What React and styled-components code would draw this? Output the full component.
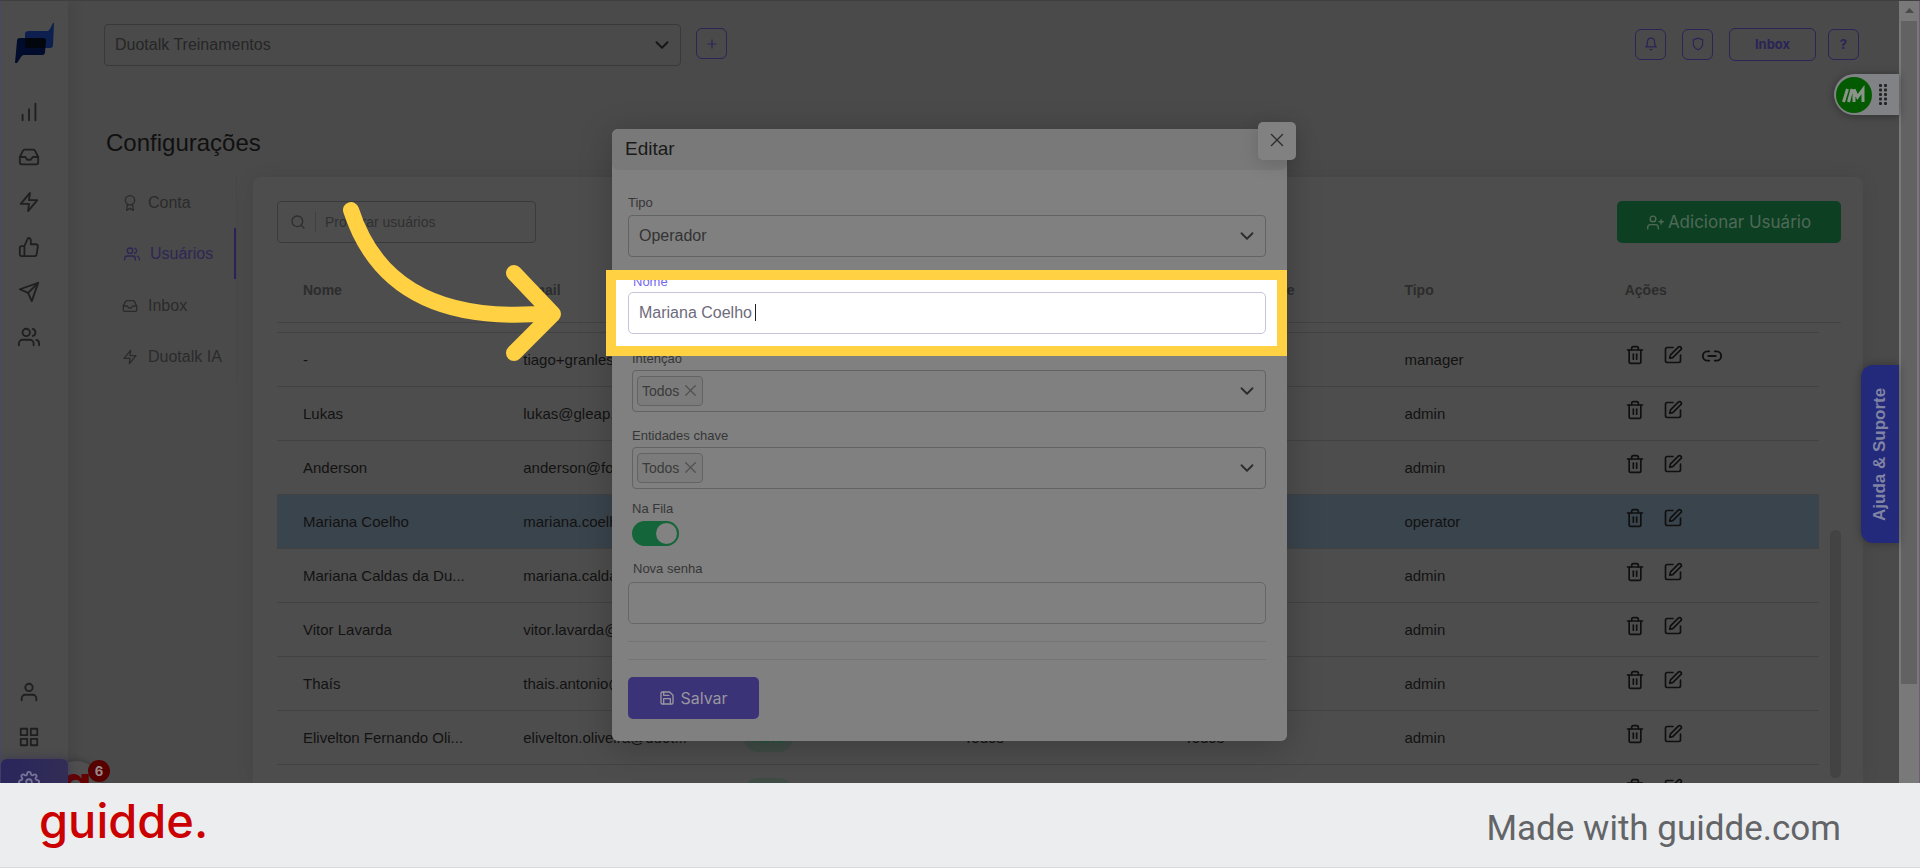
import React, { useState } from 'react'
import styled, { createGlobalStyle, css } from 'styled-components'
import {
  FiAward,
  FiBell,
  FiChevronDown,
  FiGrid,
  FiInbox,
  FiSave,
  FiSearch,
  FiSend,
  FiSettings,
  FiShield,
  FiThumbsUp,
  FiTrash2,
  FiUser,
  FiUserPlus,
  FiUsers,
  FiX,
  FiZap,
  FiPlus,
} from 'react-icons/fi'
import { ChartNoAxesColumnIncreasing, Link2, SquarePen } from 'lucide-react'

const sans = `"Liberation Sans", Arial, sans-serif`
const display = `Inter, "Open Sans", sans-serif`

const GlobalStyle = createGlobalStyle`
  *, *::before, *::after {
    box-sizing: border-box;
  }
  body {
    margin: 0;
    background: #4b4b4b;
    font-family: ${sans};
  }
  button, input, select {
    font-family: inherit;
  }
  svg {
    display: block;
    flex-shrink: 0;
  }
`

const Page = styled.div`
  height: 100vh;
  display: flex;
  flex-direction: column;
`

const Screen = styled.div`
  position: relative;
  flex: 1;
  min-height: 0;
  display: flex;
  overflow: hidden;
  background: #4a4a4a;
  border-top: 1px solid #3f3f3f;
`

/* Side navigation */

const SideNav = styled.nav`
  width: 68px;
  flex-shrink: 0;
  display: flex;
  flex-direction: column;
  padding-top: 21px;
  background: #4c4c4c;
  border-left: 1px solid #47476a;
  box-shadow: 4px 0 14px rgba(0, 0, 0, 0.08);
`

const Brand = styled.a`
  margin: 0 0 25px 14px;
`

const NavLink = styled.a`
  height: 45px;
  flex-shrink: 0;
  display: flex;
  align-items: center;
  justify-content: center;
  padding-right: 12px;
  color: #1f1f1f;
  ${p =>
    p.$active &&
    css`
      color: #77749a;
      border-radius: 6px;
      background: linear-gradient(100deg, #2a255c, #322e55);
      box-shadow: 0 0 10px rgba(40, 35, 90, 0.5);
      position: relative;
      z-index: 2;
    `}
`

const NavSpacer = styled.div`
  flex: 1;
`

const NavBottom = styled.div`
  display: flex;
  flex-direction: column;
  margin-bottom: -21px;
`

const Recorder = styled.div`
  position: absolute;
  left: 50px;
  bottom: -30px;
  width: 52px;
  height: 52px;
  border-radius: 50%;
  background: #4f4f4f;
  box-shadow: 0 0 6px rgba(0, 0, 0, 0.3);
  color: #640000;
  font: 700 50px/44px ${display};
  text-align: center;
  z-index: 1;
`

const RecorderBadge = styled.span`
  position: absolute;
  left: 88px;
  bottom: 1px;
  width: 22px;
  height: 22px;
  border-radius: 50%;
  background: #560000;
  color: #9a8a8a;
  font: 700 13px/22px ${display};
  text-align: center;
  z-index: 2;
`

/* Main column */

const Main = styled.main`
  flex: 1;
  min-width: 0;
  display: flex;
  flex-direction: column;
  padding: 23px 36px 0;
`

const TopBar = styled.header`
  display: flex;
  align-items: center;
  padding-right: 4px;
`

const SelectBox = styled.div`
  position: relative;
  height: 42px;
  border: 1px solid ${p => p.$line || '#636363'};
  border-radius: 4px;
  color: ${p => p.$icon || '#2c2c2c'};

  > svg {
    position: absolute;
    right: 7px;
    top: 9px;
    pointer-events: none;
  }
`

const AccountBox = styled(SelectBox)`
  flex: 0 1 577px;
`

const NativeSelect = styled.select`
  appearance: none;
  width: 100%;
  height: 100%;
  padding: 0 36px 2px 10px;
  border: 0;
  background: transparent;
  color: ${p => p.$ink || '#333'};
  font-size: 16px;
`

const OutlineButton = styled.button`
  display: flex;
  align-items: center;
  justify-content: center;
  width: ${p => (p.$wide ? 87 : 31)}px;
  height: ${p => (p.$wide ? 33 : 31)}px;
  padding: 0;
  border: 1px solid #2a2457;
  border-radius: 6px;
  background: transparent;
  color: #2a2457;
  font: 700 13px ${display};
`

const AddAccount = styled(OutlineButton)`
  margin: 0 auto 3px 15px;
`

const TopActions = styled.div`
  display: flex;
  align-items: center;
  gap: 16px;
  margin-bottom: 2px;

  > :last-child {
    margin-left: -4px;
  }
`

const Title = styled.h1`
  margin: 63px 0 20px 2px;
  font-size: 24px;
  font-weight: 400;
  line-height: 28px;
  color: #101010;
`

const Columns = styled.div`
  flex: 1;
  min-height: 0;
  display: flex;
`

const SubNav = styled.nav`
  width: 133px;
  flex-shrink: 0;
  align-self: flex-start;
  border-right: 1px solid #464646;
`

const SubLink = styled.a`
  display: flex;
  align-items: center;
  gap: 10px;
  height: 51px;
  margin-bottom: ${p => (p.$active ? 1 : 0)}px;
  padding-left: ${p => (p.$active ? 20 : 18)}px;
  color: ${p => (p.$active ? '#2d2754' : '#2b2b2b')};
  font-size: 16px;
  text-decoration: none;
  border-right: 2px solid ${p => (p.$active ? '#2a2359' : 'transparent')};
`

const Card = styled.section`
  flex: 1;
  min-width: 0;
  margin-left: 16px;
  padding: 24px 22px 0 24px;
  border-radius: 8px 8px 0 0;
  background: #4d4d4d;
  box-shadow: 0 0 20px rgba(0, 0, 0, 0.07);
`

const Toolbar = styled.div`
  display: flex;
  justify-content: space-between;
`

const SearchBox = styled.label`
  display: flex;
  align-items: center;
  width: 259px;
  height: 42px;
  padding-left: 12px;
  border: 1px solid #3a3a3a;
  border-radius: 4px;
  color: #2e2e2e;

  input {
    flex: 1;
    min-width: 0;
    height: 20px;
    margin-left: 9px;
    padding: 0 0 0 9px;
    border: 0;
    border-left: 1px solid #404040;
    outline: 0;
    background: transparent;
    font-size: 14px;
  }
  input::placeholder {
    color: #303030;
  }
`

const AddUserButton = styled.button`
  display: flex;
  align-items: center;
  justify-content: center;
  gap: 4px;
  width: 224px;
  height: 42px;
  border: 0;
  border-radius: 5px;
  background: #0d3f23;
  color: #4f6957;
  font: 400 17px ${display};
`

const TableArea = styled.div`
  display: flex;
  align-items: flex-start;
  margin-top: 15px;
`

const TableWrap = styled.div`
  flex: 1;
  min-width: 0;
`

const Table = styled.table`
  width: 100%;
  table-layout: fixed;
  border-collapse: separate;
  border-spacing: 0;

  th,
  td {
    padding: 0 0 0 26px;
    border-bottom: 1px solid #424242;
    text-align: left;
    white-space: nowrap;
  }
  th {
    height: 65px;
    font-size: 14px;
    color: #2c2c2c;
  }
  td {
    height: 54px;
    font-size: 15px;
    color: #121212;
  }
`

const ScrolledRow = styled.tr`
  && td {
    height: 10px;
  }
`

const Row = styled.tr`
  background: ${p => (p.$selected ? '#3a444c' : 'transparent')};
`

const StatusPill = styled.span`
  display: inline-block;
  height: 28px;
  padding: 0 9px;
  border-radius: 14px;
  background: #3f4c45;
  color: #1d5a39;
  font-size: 14px;
  line-height: 28px;
`

const Actions = styled.div`
  display: flex;
  gap: 18px;
  padding-bottom: 8px;
`

const IconButton = styled.button`
  display: flex;
  padding: 0;
  border: 0;
  background: none;
  color: #101010;
`

const ListScroll = styled.div`
  width: 22px;
  height: 520px;
  margin-top: 64px;
  padding: 207px 0 55px 11px;
  border-top: 1px solid #424242;

  div {
    height: 248px;
    border-radius: 6px;
    background: #434343;
  }
`

/* Window scrollbar */

const PageScroll = styled.div`
  width: 21px;
  flex-shrink: 0;
  display: flex;
  flex-direction: column;
  align-items: center;
  background: #797979;
  border-right: 1px solid #6d5f6d;

  svg {
    margin: 7px 0 8px;
  }
  div {
    width: 16px;
    height: 663px;
    background: #626262;
  }
`

const EdgeWidget = styled.div`
  position: absolute;
  right: 21px;
  top: 73px;
  display: flex;
  align-items: center;
  gap: 7px;
  width: 65px;
  height: 41px;
  padding-left: 2px;
  border-radius: 21px 0 0 21px;
  background: #808286;
  box-shadow: 0 1px 8px rgba(0, 0, 0, 0.35);
`

const HelpTab = styled.button`
  position: absolute;
  right: 21px;
  top: 364px;
  width: 38px;
  height: 178px;
  padding: 0;
  border: 0;
  border-radius: 0 12px 12px 0;
  background: #232a7b;
  color: #8083a3;
  box-shadow: 0 0 8px rgba(0, 0, 0, 0.3);
  font-size: 17px;
  font-weight: 700;
  writing-mode: vertical-rl;
  transform: rotate(180deg);
`

/* Edit dialog */

const Overlay = styled.div`
  position: absolute;
  inset: 128px 21px auto 0;
  display: flex;
  justify-content: center;
`

const Dialog = styled.div`
  position: relative;
  width: 675px;
  border-radius: 6px;
  background: #808080;
  box-shadow: 0 6px 34px rgba(0, 0, 0, 0.22);
`

const DialogHeader = styled.h2`
  margin: 0;
  height: 41px;
  padding-left: 13px;
  border-radius: 6px;
  background: #797979;
  color: #1a1a1a;
  font-size: 19px;
  font-weight: 400;
  line-height: 39px;
`

const CloseButton = styled.button`
  position: absolute;
  top: -7px;
  right: -9px;
  width: 38px;
  height: 38px;
  display: flex;
  align-items: center;
  justify-content: center;
  padding: 0 0 2px;
  border: 0;
  border-radius: 5px;
  background: #818181;
  color: #2d2d2d;
  box-shadow: 0 4px 18px rgba(0, 0, 0, 0.14);
`

const Form = styled.form`
  padding: 25px 21px 22px 16px;
`

const Field = styled.div`
  display: flex;
  flex-direction: column;
  gap: ${p => p.$gap || 4}px;
  margin-top: ${p => p.$top || 0}px;
  padding-left: ${p => (p.$inset ? 4 : 0)}px;
`

const Label = styled.label`
  align-self: flex-start;
  font-size: 13px;
  line-height: 16px;
  color: ${p => (p.$focus ? '#7367f0' : '#363636')};
  padding-left: ${p => (p.$indent ? 5 : 0)}px;
`

const TextInput = styled.input`
  width: 100%;
  height: 42px;
  padding: 0 10px;
  border: 1px solid ${p => (p.$focus ? '#c8c4d9' : '#666')};
  border-radius: 5px;
  outline: 0;
  background: transparent;
  color: #6e6b7b;
  font-size: 16px;
`

const Spotlight = styled.div`
  position: relative;
  z-index: 1;
  height: 86px;
  margin: 13px -21px 0 -22px;
  padding: 0 11px 0 12px;
  overflow: hidden;
  border: 10px solid #ffd143;
  background: #fff;
`

const Caret = styled.span`
  position: absolute;
  left: 139px;
  top: 24px;
  width: 1px;
  height: 17px;
  background: #222;
`

const Chip = styled.span`
  display: inline-flex;
  align-items: center;
  gap: 2px;
  height: 30px;
  margin: 5px 4px;
  padding: 0 2px 1px 4px;
  border: 1px solid #636363;
  border-radius: 4px;
  background: #7b7b7b;
  color: #3a3a3a;
  font-size: 14px;

  button {
    display: flex;
    padding: 0;
    border: 0;
    background: none;
    color: #505050;
  }
`

const Switch = styled.input`
  appearance: none;
  width: 47px;
  height: 25px;
  margin: 0;
  padding: 2px;
  border-radius: 13px;
  background: #14663a;

  &::before {
    content: '';
    display: block;
    width: 21px;
    height: 21px;
    margin-left: 22px;
    border-radius: 50%;
    background: #828282;
  }
`

const Divider = styled.hr`
  height: 1px;
  margin: 17px 0 0;
  border: 0;
  background: #747474;
`

const SaveButton = styled.button`
  display: flex;
  align-items: center;
  justify-content: center;
  gap: 5px;
  width: 131px;
  height: 42px;
  margin-top: 17px;
  padding: 0;
  border: 0;
  border-radius: 5px;
  background: #3a3378;
  color: #99969f;
  font: 400 16px ${display};
`

const Arrow = styled.svg`
  position: absolute;
  left: 340px;
  top: 199px;
  pointer-events: none;
`

/* Footer */

const Footer = styled.footer`
  height: 85px;
  flex-shrink: 0;
  display: flex;
  align-items: center;
  justify-content: space-between;
  padding: 0 79px 0 39px;
  background: #ecedef;
  border-bottom: 1px solid #d9dadc;
`

const Wordmark = styled.span`
  color: #cb0000;
  font: 500 47px/56px ${display};
  margin-bottom: 8px;
`

const MadeWith = styled.span`
  color: #626467;
  font: 400 35px/42px Roboto, sans-serif;
  margin-top: 7px;
`

const users = [
  { name: '-', email: 'tiago+granlest@duotalk.io', type: 'manager', link: true },
  { name: 'Lukas', email: 'lukas@gleap.io', type: 'admin' },
  { name: 'Anderson', email: 'anderson@formare.com', type: 'admin' },
  { name: 'Mariana Coelho', email: 'mariana.coelho@duot...', type: 'operator', selected: true },
  { name: 'Mariana Caldas da Du...', email: 'mariana.caldas@duot...', type: 'admin' },
  { name: 'Vitor Lavarda', email: 'vitor.lavarda@duotalk.io', type: 'admin' },
  { name: 'Thaís', email: 'thais.antonio@duotalk.io', type: 'admin' },
  { name: 'Elivelton Fernando Oli...', email: 'elivelton.oliveira@duot...', type: 'admin' },
  { name: '', email: '', type: '' },
]

const headings = ['Nome', 'Email', 'Ativo', 'Intenção', 'Entidades chave', 'Tipo', 'Ações']

const navItems = [
  ['Relatórios', ChartNoAxesColumnIncreasing],
  ['Inbox', FiInbox],
  ['Automação', FiZap],
  ['Avaliações', FiThumbsUp],
  ['Campanhas', FiSend],
  ['Contatos', FiUsers],
]

const subItems = [
  ['Conta', FiAward],
  ['Usuários', FiUsers],
  ['Inbox', FiInbox],
  ['Duotalk IA', FiZap],
]

const BrandMark = () => (
  <svg width="40" height="42" viewBox="0 0 40 42">
    <path d="M14 9h18q2 0 3-2l3-6h1l-1 22q0 3-3 3H13q-3 0-3-3V12q0-3 4-3z" fill="#0c1f4f" />
    <path d="M5 16h23q3 0 3 3l-1 11q0 3-3 3H9q-2 0-3 2l-4 6H0l2-22q0-3 3-3z" fill="#010b2b" />
    <path d="M10 16h18q3 0 3 3l-1 7H13q-3 0-3-3z" fill="#02060d" />
  </svg>
)

const Grip = () => (
  <svg width="8" height="22" viewBox="0 0 8 22" fill="#242424">
    {[0, 1, 2, 3, 4].map(i => (
      <React.Fragment key={i}>
        <rect x="0" y={i * 4.5} width="3" height="3" rx="1" />
        <rect x="5" y={i * 4.5} width="3" height="3" rx="1" />
      </React.Fragment>
    ))}
  </svg>
)

const SideBar = () => (
  <SideNav>
    <Brand href="#home" aria-label="Duotalk">
      <BrandMark />
    </Brand>
    {navItems.map(([label, Icon]) => (
      <NavLink key={label} href="#" aria-label={label}>
        <Icon size={22} />
      </NavLink>
    ))}
    <NavSpacer />
    <NavBottom>
      <NavLink href="#perfil" aria-label="Perfil">
        <FiUser size={22} />
      </NavLink>
      <NavLink href="#apps" aria-label="Apps">
        <FiGrid size={22} />
      </NavLink>
      <NavLink href="#config" aria-label="Configurações" $active>
        <FiSettings size={22} />
      </NavLink>
    </NavBottom>
  </SideNav>
)

const UserRow = ({ user }) => (
  <Row $selected={user.selected}>
    <td>{user.name}</td>
    <td>{user.email}</td>
    <td>
      <StatusPill>Ativo</StatusPill>
    </td>
    <td>{user.name && 'Todos'}</td>
    <td>{user.name && 'Todos'}</td>
    <td>{user.type}</td>
    <td>
      <Actions>
        <IconButton aria-label="Excluir">
          <FiTrash2 size={20} />
        </IconButton>
        <IconButton aria-label="Editar">
          <SquarePen size={20} />
        </IconButton>
        {user.link && (
          <IconButton aria-label="Copiar link">
            <Link2 size={22} />
          </IconButton>
        )}
      </Actions>
    </td>
  </Row>
)

const ChipSelect = ({ id }) => (
  <SelectBox id={id} role="group" aria-labelledby={`${id}-label`}>
    <Chip>
      Todos
      <button type="button" aria-label="Remover Todos">
        <FiX size={19} strokeWidth={1.5} />
      </button>
    </Chip>
    <FiChevronDown size={22} />
  </SelectBox>
)

const EditDialog = () => {
  const [name, setName] = useState('Mariana Coelho')
  const [queued, setQueued] = useState(true)

  return (
    <Overlay>
      <Dialog role="dialog" aria-labelledby="dialog-title">
        <DialogHeader id="dialog-title">Editar</DialogHeader>
        <CloseButton aria-label="Fechar">
          <FiX size={22} strokeWidth={1.5} />
        </CloseButton>
        <Form onSubmit={e => e.preventDefault()}>
          <Field>
            <Label htmlFor="tipo">Tipo</Label>
            <SelectBox>
              <NativeSelect id="tipo" defaultValue="Operador">
                <option>Operador</option>
              </NativeSelect>
              <FiChevronDown size={22} />
            </SelectBox>
          </Field>
          <Spotlight>
            <Field $top={-6} $gap={2}>
              <Label htmlFor="nome" $focus $indent>
                Nome
              </Label>
              <TextInput
                id="nome"
                value={name}
                onChange={e => setName(e.target.value)}
                $focus
              />
            </Field>
            <Caret />
          </Spotlight>
          <Field $top={-5} $gap={3} $inset>
            <Label as="span" id="intencao-label">
              Intenção
            </Label>
            <ChipSelect id="intencao" />
          </Field>
          <Field $top={16} $gap={3} $inset>
            <Label as="span" id="entidades-label">
              Entidades chave
            </Label>
            <ChipSelect id="entidades" />
          </Field>
          <Field $top={12} $inset>
            <Label htmlFor="fila">Na Fila</Label>
            <Switch
              id="fila"
              type="checkbox"
              checked={queued}
              onChange={e => setQueued(e.target.checked)}
            />
          </Field>
          <Field $top={15} $gap={5}>
            <Label htmlFor="senha" $indent>
              Nova senha
            </Label>
            <TextInput id="senha" type="password" />
          </Field>
          <Divider />
          <Divider />
          <SaveButton type="submit">
            <FiSave size={16} />
            Salvar
          </SaveButton>
        </Form>
      </Dialog>
    </Overlay>
  )
}

export default function App() {
  return (
    <Page>
      <GlobalStyle />
      <Screen>
        <SideBar />
        <Main>
          <TopBar>
            <AccountBox $line="#393939" $icon="#151515">
              <NativeSelect aria-label="Conta" defaultValue="Duotalk Treinamentos" $ink="#262626">
                <option>Duotalk Treinamentos</option>
              </NativeSelect>
              <FiChevronDown size={22} />
            </AccountBox>
            <AddAccount aria-label="Adicionar conta">
              <FiPlus size={14} />
            </AddAccount>
            <TopActions>
              <OutlineButton aria-label="Notificações">
                <FiBell size={14} />
              </OutlineButton>
              <OutlineButton aria-label="Segurança">
                <FiShield size={14} />
              </OutlineButton>
              <OutlineButton $wide>Inbox</OutlineButton>
              <OutlineButton>?</OutlineButton>
            </TopActions>
          </TopBar>
          <Title>Configurações</Title>
          <Columns>
            <SubNav>
              {subItems.map(([label, Icon]) => (
                <SubLink key={label} href="#" $active={label === 'Usuários'}>
                  <Icon size={16} />
                  {label}
                </SubLink>
              ))}
            </SubNav>
            <Card>
              <Toolbar>
                <SearchBox>
                  <FiSearch size={16} />
                  <input type="text" aria-label="Procurar usuários" placeholder="Procurar usuários" />
                </SearchBox>
                <AddUserButton>
                  <FiUserPlus size={17} />
                  Adicionar Usuário
                </AddUserButton>
              </Toolbar>
              <TableArea>
                <TableWrap>
                  <Table>
                    <thead>
                      <tr>
                        {headings.map(h => (
                          <th key={h}>{h}</th>
                        ))}
                      </tr>
                    </thead>
                    <tbody>
                      <ScrolledRow>
                        <td colSpan={7} />
                      </ScrolledRow>
                      {users.map((user, i) => (
                        <UserRow key={i} user={user} />
                      ))}
                    </tbody>
                  </Table>
                </TableWrap>
                <ListScroll>
                  <div />
                </ListScroll>
              </TableArea>
            </Card>
          </Columns>
        </Main>
        <PageScroll>
          <svg width="9" height="5" viewBox="0 0 9 5">
            <path d="M0 5 4.500 0 9 5z" fill="#4a4a4a" />
          </svg>
          <div />
        </PageScroll>
        <Recorder>g</Recorder>
        <RecorderBadge>6</RecorderBadge>
        <EdgeWidget>
          <svg width="36" height="36" viewBox="0 0 36 36">
            <circle cx="18" cy="18" r="18" fill="#035a00" />
            <path
              d="M7.500 25 11.500 12M12.500 25 16 12M18 25V12.500L21.500 20 27 12.500V25"
              fill="none"
              stroke="#8b948b"
              strokeWidth="3"
            />
          </svg>
          <Grip />
        </EdgeWidget>
        <HelpTab>Ajuda &amp; Suporte</HelpTab>
        <EditDialog />
        <Arrow width="224" height="164" viewBox="340 200 224 164">
          <path
            d="M351 210C372 275 425 325 551 313M514 273 553 314 514 353"
            fill="none"
            stroke="#ffd143"
            strokeWidth="16"
            strokeLinecap="round"
            strokeLinejoin="round"
          />
        </Arrow>
      </Screen>
      <Footer>
        <Wordmark>guidde.</Wordmark>
        <MadeWith>Made with guidde.com</MadeWith>
      </Footer>
    </Page>
  )
}
